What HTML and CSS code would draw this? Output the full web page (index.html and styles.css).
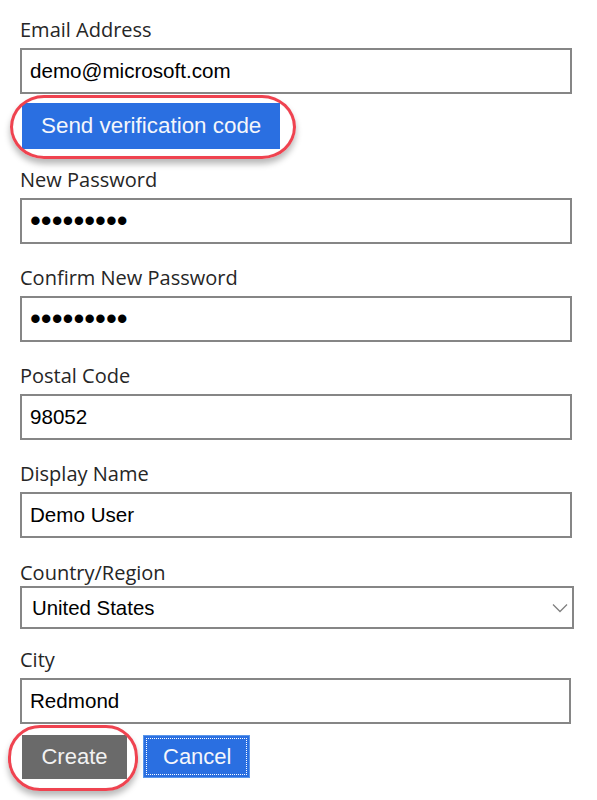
FILE: index.html
```html
<!DOCTYPE html>
<html lang="en">
<head>
<meta charset="utf-8">
<title>Sign up</title>
<link rel="stylesheet" href="styles.css">
</head>
<body>
<form class="form">
  <div class="field field-first">
    <label class="label" for="email">Email Address</label>
    <input class="input" id="email" type="text" value="demo@microsoft.com">
  </div>
  <div class="callout callout-send">
    <button type="button" class="btn btn-blue btn-send">Send verification code</button>
  </div>
  <div class="field field-after-btn">
    <label class="label" for="pw1">New Password</label>
    <input class="input input-pw" id="pw1" type="password" value="password1">
  </div>
  <div class="field">
    <label class="label" for="pw2">Confirm New Password</label>
    <input class="input input-pw" id="pw2" type="password" value="password1">
  </div>
  <div class="field">
    <label class="label" for="zip">Postal Code</label>
    <input class="input" id="zip" type="text" value="98052">
  </div>
  <div class="field">
    <label class="label" for="name">Display Name</label>
    <input class="input" id="name" type="text" value="Demo User">
  </div>
  <div class="field field-select">
    <label class="label" for="country">Country/Region</label>
    <div class="select-wrap">
      <select class="select" id="country">
        <option>United States</option>
      </select>
      <svg class="chevron" width="16" height="10" viewBox="0 0 16 10" aria-hidden="true">
        <path d="M1 1.5 L8 8.5 L15 1.5" fill="none" stroke="#808080" stroke-width="1.3"/>
      </svg>
    </div>
  </div>
  <div class="field field-city">
    <label class="label" for="city">City</label>
    <input class="input input-city" id="city" type="text" value="Redmond">
  </div>
  <div class="actions">
    <div class="callout callout-create">
      <button type="button" class="btn btn-gray">Create</button>
    </div>
    <button type="button" class="btn btn-blue btn-cancel">Cancel</button>
  </div>
</form>
</body>
</html>
```

FILE: styles.css
```css
html, body {
  margin: 0;
  padding: 0;
  background: #ffffff;
}

body {
  min-height: 800px;
}

.form {
  display: flex;
  flex-direction: column;
  align-items: flex-start;
  padding: 18px 0 20px 20px;
  width: 555px;
}

.field {
  display: flex;
  flex-direction: column;
  width: 552px;
  margin-top: 22px;
}

.field-first {
  margin-top: 0;
}

.field-after-btn {
  margin-top: 19px;
}

.field-select {
  margin-top: 23px;
}

.field-city {
  margin-top: 19px;
}

.label {
  font-family: "Open Sans", "Noto Sans", sans-serif;
  font-size: 20px;
  line-height: 24px;
  height: 24px;
  color: #262626;
  margin-bottom: 6px;
}

.field-first .label {
  margin-bottom: 6px;
}

.field-select .label {
  margin-bottom: 1px;
}

.input {
  box-sizing: border-box;
  width: 552px;
  height: 46px;
  margin: 0;
  padding: 0 8px;
  border: 2px solid #868686;
  border-radius: 0;
  background: #ffffff;
  font-family: "Liberation Sans", Arial, sans-serif;
  font-size: 20.6px;
  color: #000000;
  outline: none;
}

.input-city {
  width: 551px;
}

.input-pw {
  font-size: 31px;
  letter-spacing: 0px;
  padding-left: 8px;
}

.select-wrap {
  position: relative;
  width: 554px;
  height: 43px;
}

.select {
  box-sizing: border-box;
  width: 554px;
  height: 43px;
  margin: 0;
  padding: 0 0 0 10px;
  border: 2px solid #868686;
  border-radius: 0;
  background: #ffffff;
  font-family: "Liberation Sans", Arial, sans-serif;
  font-size: 20.4px;
  color: #000000;
  appearance: none;
  -webkit-appearance: none;
  outline: none;
}

.chevron {
  position: absolute;
  right: 6px;
  top: 17px;
  pointer-events: none;
}

.callout {
  position: relative;
  display: inline-flex;
}

.callout::after {
  content: "";
  position: absolute;
  border: 3px solid #ef4350;
  box-shadow: 0 5px 6px rgba(0, 0, 0, 0.28), inset 0 0 1px rgba(0, 0, 0, 0.1);
  pointer-events: none;
}

.callout-send {
  margin: 9px 0 0 2px;
}

.callout-send::after {
  left: -12px;
  right: -16px;
  top: -8px;
  bottom: -10px;
  border-radius: 34px / 32px;
}

.callout-create::after {
  left: -14px;
  right: -11px;
  top: -10px;
  bottom: -12px;
  border-radius: 32px;
}

.btn {
  box-sizing: border-box;
  height: 44px;
  margin: 0;
  padding: 0 19px;
  border: none;
  border-radius: 0;
  font-family: "Liberation Sans", Arial, sans-serif;
  font-size: 22px;
  color: #f4f6fb;
  cursor: pointer;
}

.btn-blue {
  background: #2a6fe1;
}

.btn-send {
  height: 46px;
  font-size: 22.4px;
}

.btn-gray {
  background: #6a6a6a;
  color: #f2f2f2;
  width: 105px;
}

.btn-cancel {
  width: 107px;
  height: 43px;
  border: 1px solid #5b97ea;
  outline: 1px dotted #ffffff;
  outline-offset: -4px;
}

.actions {
  display: flex;
  align-items: flex-start;
  gap: 16px;
  margin: 11px 0 0 2px;
}
```
